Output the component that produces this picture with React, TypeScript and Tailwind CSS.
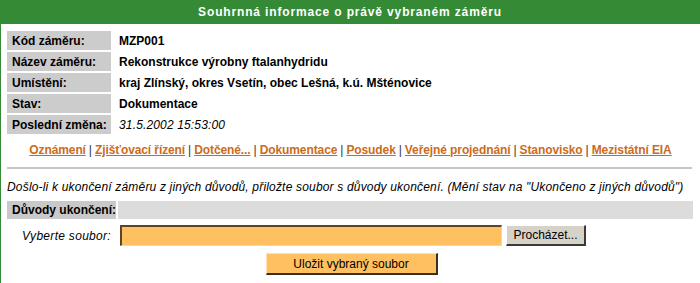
import React from "react";

const rows: { label: string; value: string; italic?: boolean }[] = [
  { label: "Kód záměru:", value: "MZP001" },
  { label: "Název záměru:", value: "Rekonstrukce výrobny ftalanhydridu" },
  { label: "Umístění:", value: "kraj Zlínský, okres Vsetín, obec Lešná, k.ú. Mšténovice" },
  { label: "Stav:", value: "Dokumentace" },
  { label: "Poslední změna:", value: "31.5.2002 15:53:00", italic: true },
];

const links = [
  "Oznámení",
  "Zjišťovací řízení",
  "Dotčené...",
  "Dokumentace",
  "Posudek",
  "Veřejné projednání",
  "Stanovisko",
  "Mezistátní EIA",
];

function App() {
  return (
    <div
      className="w-[700px] h-[283px] bg-white text-black text-[12px] overflow-hidden"
      style={{ fontFamily: '"Liberation Sans", Arial, sans-serif' }}
    >
      <div className="h-[24px] bg-[#358a35] text-white font-bold flex items-center justify-center tracking-[0.85px] text-[12px]">
        Souhrnná informace o právě vybraném záměru
      </div>
      <div className="border-l border-[#358a35] h-[259px] pl-[6px] pr-[6px]">
        {/* info table */}
        <div className="flex flex-col gap-[2px] pt-[7px]">
          {rows.map((r) => (
            <div key={r.label} className="flex h-[19px] gap-[2px]">
              <div className="w-[104px] bg-[#cccccc] font-bold pl-[5px] flex items-center">
                {r.label}
              </div>
              <div
                className={
                  "pl-[6px] flex items-center " + (r.italic ? "italic tracking-[0.15px]" : "font-bold")
                }
              >
                {r.value}
              </div>
            </div>
          ))}
        </div>

        {/* links */}
        <div className="flex justify-center items-center h-[20px] mt-[6px] text-[12px]">
          {links.map((l, i) => (
            <React.Fragment key={l}>
              {i > 0 && <span className="px-[3px] text-[#333333]">|</span>}
              <a className="font-bold text-[#cc6b1c] underline cursor-pointer tracking-[-0.1px]">{l}</a>
            </React.Fragment>
          ))}
        </div>
        <div className="mt-[7px] border-t-2 border-[#c6c6c6] mr-[2px]" />

        <div className="italic mt-[10px] h-[16px] flex items-center whitespace-nowrap tracking-[0.18px]">
          Došlo-li k ukončení záměru z jiných důvodů, přiložte soubor s důvody ukončení. (Mění stav na "Ukončeno z jiných důvodů")
        </div>

        {/* reason bar */}
        <div className="flex h-[18px] gap-[2px] mt-[6px] mr-[1px]">
          <div className="w-[109px] bg-[#c9c9c9] font-bold pl-[5px] flex items-center">
            Důvody ukončení:
          </div>
          <div className="flex-1 bg-[#dcdcdc]" />
        </div>

        {/* file row */}
        <div className="flex items-center h-[21px] mt-[6px]">
          <div className="w-[107px] text-right italic pr-[3px] tracking-[0.3px] whitespace-nowrap">Vyberte soubor:</div>
          <div className="ml-[6px] w-[382px] h-[21px] bg-[#ffc062] border-t-2 border-l-2 border-t-[#5a4626] border-l-[#5a4626] border-b border-r border-b-[#ffd590] border-r-[#ffd590]" />
          <button className="ml-[4px] w-[80px] h-[21px] bg-[#d6d2c8] border-t border-l border-t-white border-l-white border-b-2 border-r-2 border-b-[#3a3a3a] border-r-[#3a3a3a] text-[12px] flex items-center justify-center">
            Procházet...
          </button>
        </div>

        {/* save */}
        <div className="flex justify-center mt-[7px]">
          <button className="ml-[2px] w-[172px] h-[22px] bg-[#ffc062] border-t border-l border-t-[#ffe0b0] border-l-[#ffe0b0] border-b-2 border-r-2 border-b-[#3a3020] border-r-[#3a3020] text-[12px] flex items-center justify-center">
            Uložit vybraný soubor
          </button>
        </div>
      </div>
    </div>
  );
}

export default App;
